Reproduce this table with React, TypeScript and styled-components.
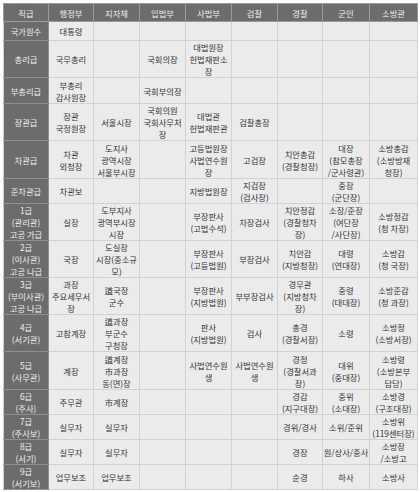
import React from "react";
import styled, { createGlobalStyle } from "styled-components";

const Global = createGlobalStyle`
  html, body { margin: 0; padding: 0; background: #ffffff; }
  body { font-family: "Noto Sans CJK KR", "Noto Sans", sans-serif; }
`;

const Page = styled.div`
  padding: 3px 3px 3px 3px;
`;

const Table = styled.table`
  border-collapse: collapse;
  table-layout: fixed;
  width: 414px;
  font-size: 8.3px;
  line-height: 12px;
`;

const HeadCell = styled.th`
  background: #6c6c6c;
  color: #eeeeee;
  font-weight: 400;
  border: 1px solid #9a9a9a;
  text-align: center;
  vertical-align: middle;
  padding: 0;
  white-space: nowrap;
`;

const RankCell = styled.th`
  background: #6c6c6c;
  color: #eeeeee;
  font-weight: 400;
  border: 1px solid #8f8f8f;
  border-left-color: #cfcfcf;
  text-align: center;
  vertical-align: middle;
  padding: 0;
  white-space: nowrap;
`;

const Cell = styled.td`
  background: #ebebeb;
  color: #333333;
  border: 1px solid #d2d2d2;
  text-align: center;
  vertical-align: middle;
  padding: 0;
  white-space: nowrap;
`;

const Row = styled.tr<{ $h: number }>`
  height: ${(p) => p.$h}px;
`;

const Line = styled.div``;

type Content = string | string[];

const headers = ["직급", "행정부", "지자체", "입법부", "사법부", "검찰", "경찰", "군인", "소방관"];
const widths = [45, 45, 46, 46, 46, 46, 45, 47, 48];

const rows: { h: number; rank: Content; cells: Content[] }[] = [
  { h: 19, rank: "국가원수", cells: ["대통령", "", "", "", "", "", "", ""] },
  { h: 37, rank: "총리급", cells: ["국무총리", "", "국회의장", ["대법원장", "헌법재판소", "장"], "", "", "", ""] },
  { h: 26, rank: "부총리급", cells: [["부총리", "감사원장"], "", "국회부의장", "", "", "", "", ""] },
  {
    h: 36,
    rank: "장관급",
    cells: [["장관", "국정원장"], "서울시장", ["국회의원", "국회사무처", "장"], ["대법관", "헌법재판관"], "검찰총장", "", "", ""],
  },
  {
    h: 38,
    rank: "차관급",
    cells: [
      ["차관", "외청장"],
      ["도지사", "광역시장", "서울부시장"],
      "",
      ["고등법원장", "사법연수원", "장"],
      "고검장",
      ["치안총감", "(경찰청장)"],
      ["대장", "(참모총장", "/군사령관)"],
      ["소방총감", "(소방방재", "청장)"],
    ],
  },
  { h: 25, rank: "준차관급", cells: ["차관보", "", "", "지방법원장", ["지검장", "(검사장)"], "", ["중장", "(군단장)"], ""] },
  {
    h: 37,
    rank: ["1급", "(관리관)", "고공 가급"],
    cells: [
      "실장",
      ["도부지사", "광역부시장", "시장"],
      "",
      ["부장판사", "(고법수석)"],
      "차장검사",
      ["치안정감", "(경찰청차", "장)"],
      ["소장/준장", "(여단장", "/사단장)"],
      ["소방정감", "(청 차장)"],
    ],
  },
  {
    h: 36,
    rank: ["2급", "(이사관)", "고공 나급"],
    cells: [
      "국장",
      ["도실장", "시장(중소규", "모)"],
      "",
      ["부장판사", "(고등법원)"],
      "부장검사",
      ["치안감", "(지방청장)"],
      ["대령", "(연대장)"],
      ["소방감", "(청 국장)"],
    ],
  },
  {
    h: 37,
    rank: ["3급", "(부이사관)", "고공 나급"],
    cells: [
      ["과장", "주요세무서", "장"],
      ["道국장", "군수"],
      "",
      ["부장판사", "(지방법원)"],
      "부부장검사",
      ["경무관", "(지방청차", "장)"],
      ["중령", "(대대장)"],
      ["소방준감", "(청 과장)"],
    ],
  },
  {
    h: 37,
    rank: ["4급", "(서기관)"],
    cells: [
      "고참계장",
      ["道과장", "부군수", "구청장"],
      "",
      ["판사", "(지방법원)"],
      "검사",
      ["총경", "(경찰서장)"],
      "소령",
      ["소방정", "(소방서장)"],
    ],
  },
  {
    h: 38,
    rank: ["5급", "(사무관)"],
    cells: [
      "계장",
      ["道계장", "市과장", "동(면)장"],
      "",
      ["사법연수원", "생"],
      ["사법연수원", "생"],
      ["경정", "(경찰서과", "장)"],
      ["대위", "(중대장)"],
      ["소방령", "(소방본부", "담당)"],
    ],
  },
  {
    h: 25,
    rank: ["6급", "(주사)"],
    cells: ["주무관", "市계장", "", "", "", ["경감", "(지구대장)"], ["중위", "(소대장)"], ["소방경", "(구조대장)"]],
  },
  {
    h: 25,
    rank: ["7급", "(주사보)"],
    cells: ["실무자", "실무자", "", "", "", "경위/경사", "소위/준위", ["소방위", "(119센터장)"]],
  },
  {
    h: 25,
    rank: ["8급", "(서기)"],
    cells: ["실무자", "실무자", "", "", "", "경장", "원/상사/중사", ["소방장", "/소방고"]],
  },
  {
    h: 25,
    rank: ["9급", "(서기보)"],
    cells: ["업무보조", "업무보조", "", "", "", "순경", "하사", "소방사"],
  },
];

function Lines({ c }: { c: Content }) {
  if (Array.isArray(c)) {
    return (
      <>
        {c.map((l, i) => (
          <Line key={i}>{l}</Line>
        ))}
      </>
    );
  }
  return <>{c}</>;
}

export default function App() {
  return (
    <>
      <Global />
      <Page>
        <Table>
          <colgroup>
            {widths.map((w, i) => (
              <col key={i} style={{ width: w }} />
            ))}
          </colgroup>
          <thead>
            <Row $h={18}>
              {headers.map((h) => (
                <HeadCell key={h}>{h}</HeadCell>
              ))}
            </Row>
          </thead>
          <tbody>
            {rows.map((r, i) => (
              <Row key={i} $h={r.h}>
                <RankCell>
                  <Lines c={r.rank} />
                </RankCell>
                {r.cells.map((c, j) => (
                  <Cell key={j}>
                    <Lines c={c} />
                  </Cell>
                ))}
              </Row>
            ))}
          </tbody>
        </Table>
      </Page>
    </>
  );
}
